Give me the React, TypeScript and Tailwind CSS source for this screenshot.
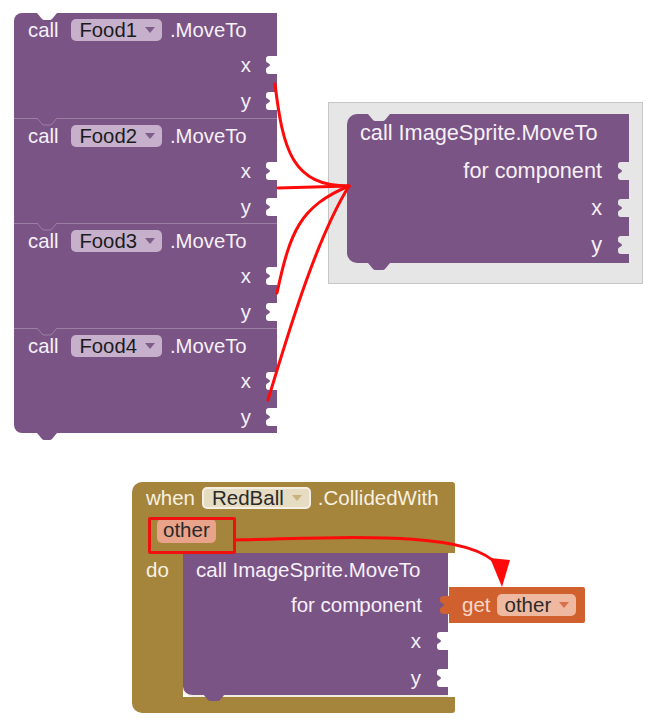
import React from "react";

const PURPLE = "bg-[#7b5486]";

// white cut-out where a value block would plug in
function Socket({ fill = "#ffffff" }: { fill?: string }) {
  return (
    <svg width="11" height="18" viewBox="0 0 11 18" className="block">
      <path d="M11,0 H3 Q0,0 0,3 V5 Q0,6 2,7 Q4,8 4,9 Q4,10 2,11 Q0,12 0,13 V15 Q0,18 3,18 H11 Z" fill={fill} />
    </svg>
  );
}

function Dropdown({ label, bg, arrow, text = "text-[#1c1c1c]", border = "" }: { label: string; bg: string; arrow: string; text?: string; border?: string }) {
  return (
    <span className={`inline-flex items-center h-[22px] rounded-[5px] pl-[8px] pr-[7px] gap-[8px] ${bg} ${text} ${border}`}>
      <span className="leading-none">{label}</span>
      <svg width="10" height="6" viewBox="0 0 10 6">
        <path d="M0,0 H10 L5,6 Z" fill={arrow} />
      </svg>
    </span>
  );
}

function Row({ label, h, fill, gap = "mr-[15px]" }: { label: string; h: string; fill?: string; gap?: string }) {
  return (
    <div className={`flex items-center justify-end ${h}`}>
      <span className={`leading-none ${gap}`}>{label}</span>
      <Socket fill={fill} />
    </div>
  );
}

function FoodBlock({ n, first, last }: { n: number; first?: boolean; last?: boolean }) {
  return (
    <div
      className={`relative ${PURPLE} h-[105px] text-[20.3px] text-[#f6f0f7] ${first ? "rounded-tl-[8px]" : "border-t border-[#9b80a3]"} ${last ? "rounded-bl-[8px]" : ""}`}
    >
      {first ? (
        <svg width="20" height="7" viewBox="0 0 20 7" className="absolute top-0 left-[23px]">
          <path d="M0,0 H20 L15,6 Q14,7 13,7 H7 Q6,7 5,6 Z" fill="#ffffff" />
        </svg>
      ) : (
        <svg width="22" height="8" viewBox="0 0 22 8" className="absolute -top-px left-[22px]">
          <path d="M1,0 L6,6 Q7,7 8,7 H14 Q15,7 16,6 L21,0" fill="#7b5486" stroke="#9b80a3" strokeWidth="1" />
        </svg>
      )}
      {last && (
        <svg width="20" height="7" viewBox="0 0 20 7" className="absolute top-full left-[23px]">
          <path d="M0,0 H20 L15,6 Q14,7 13,7 H7 Q6,7 5,6 Z" fill="#7b5486" />
        </svg>
      )}
      <div className="flex items-center h-[34px] pl-[14px] gap-[13px]">
        <span className="leading-none">call</span>
        <span className="flex items-center gap-[8px]">
          <Dropdown label={`Food${n}`} bg="bg-[#c6b0cc]" arrow="#7f5d89" />
          <span className="leading-none">.MoveTo</span>
        </span>
      </div>
      <Row label="x" h="h-[36px]" />
      <Row label="y" h="h-[36px]" />
    </div>
  );
}

export default function App() {
  return (
    <div className="relative w-[653px] h-[720px] bg-white overflow-hidden" style={{ fontFamily: '"Liberation Sans", Arial, sans-serif' }}>
      {/* stacked Food blocks */}
      <div className="absolute left-[14px] top-[13px] w-[263px] flex flex-col">
        <FoodBlock n={1} first />
        <FoodBlock n={2} />
        <FoodBlock n={3} />
        <FoodBlock n={4} last />
      </div>

      {/* generic MoveTo in grey panel */}
      <div className="absolute left-[328px] top-[102px] w-[315px] h-[182px] bg-[#e6e6e6] border border-[#c6c6c6] pt-[11px] pl-[18px]">
        <div className={`relative ${PURPLE} w-[282px] h-[149px] rounded-l-[10px] text-[21.7px] text-[#f6f0f7]`}>
          <svg width="22" height="7" viewBox="0 0 22 7" className="absolute top-0 left-[21px]">
            <path d="M0,0 H22 L17,6 Q16,7 15,7 H7 Q6,7 5,6 Z" fill="#e6e6e6" />
          </svg>
          <svg width="22" height="7" viewBox="0 0 22 7" className="absolute top-full left-[21px]">
            <path d="M0,0 H22 L17,6 Q16,7 15,7 H7 Q6,7 5,6 Z" fill="#7b5486" />
          </svg>
          <div className="flex items-center h-[38px] pl-[13px]">
            <span className="leading-none">call ImageSprite.MoveTo</span>
          </div>
          <Row label="for component" h="h-[37px]" fill="#e6e6e6" gap="mr-[16px]" />
          <Row label="x" h="h-[37px]" fill="#e6e6e6" gap="mr-[16px]" />
          <Row label="y" h="h-[37px]" fill="#e6e6e6" gap="mr-[16px]" />
        </div>
      </div>

      {/* event handler */}
      <div className="absolute left-[132px] top-[482px] w-[323px] flex flex-col text-[20.5px] text-[#f7f1e2]">
        <div className="bg-[#a5843b] rounded-tl-[10px] rounded-tr-[3px] h-[71px] pl-[14px] pt-[3px]">
          <div className="flex items-center h-[26px] gap-[7px]">
            <span className="leading-none">when</span>
            <Dropdown label="RedBall" bg="bg-[#e5dcc2]" arrow="#c9b27c" text="text-[#2a2a2a]" border="border-2 border-[#f3efe4]" />
            <span className="leading-none">.CollidedWith</span>
          </div>
          <div className="flex items-center h-[39px] pl-[11px]">
            <span className="inline-flex items-center h-[24px] rounded-[5px] px-[6px] bg-[#e8a38a] text-[#2a2a2a] leading-none">other</span>
          </div>
        </div>
        <div className="flex">
          <div className="bg-[#a5843b] w-[51px] h-[144px] pl-[14px] flex flex-col">
            <div className="flex items-center h-[34px]">
              <span className="leading-none">do</span>
            </div>
          </div>
          <div className={`relative ${PURPLE} w-[265px] h-[144px] rounded-bl-[10px] border-b-2 border-[#f1ece2] text-[#f6f0f7]`}>
            <svg width="22" height="7" viewBox="0 0 22 7" className="absolute top-full left-[20px] -mt-[1px]">
              <path d="M0,0 H22 L17,6 Q16,7 15,7 H7 Q6,7 5,6 Z" fill="#7b5486" />
            </svg>
            <div className="flex items-center h-[34px] pl-[13px]">
              <span className="leading-none">call ImageSprite.MoveTo</span>
            </div>
            <div className="flex items-center justify-end h-[36px]">
              <span className="leading-none mr-[26px]">for component</span>
            </div>
            <Row label="x" h="h-[36px]" gap="mr-[16px]" />
            <Row label="y" h="h-[38px]" gap="mr-[16px]" />
          </div>
        </div>
        <div className="bg-[#a5843b] h-[16px] rounded-bl-[10px] rounded-br-[3px]" />
      </div>

      {/* get other */}
      <div className="absolute left-[440px] top-[587px] flex items-center">
        <svg width="9" height="36" viewBox="0 0 9 36" className="block">
          <path d="M9,0 V9 H4 Q0,9 0,12 V14 Q0,15 2,16 Q4,17 4,18 Q4,19 2,20 Q0,21 0,22 V24 Q0,27 4,27 H9 V36 Z" fill="#d0612f" />
        </svg>
        <div className="bg-[#d0612f] h-[36px] w-[136px] rounded-r-[2px] flex items-center pl-[13px] gap-[6px] text-[20.5px]">
          <span className="leading-none text-[#f7d7c9]">get</span>
          <Dropdown label="other" bg="bg-[#efb9a1]" arrow="#d9704a" text="text-[#2a2a2a]" />
        </div>
      </div>

      {/* annotation box */}
      <div className="absolute left-[148px] top-[517px] w-[88px] h-[37px] border-[3px] border-[#f01010] rounded-[2px]" />

      {/* arrows */}
      <svg width="653" height="720" className="absolute inset-0 pointer-events-none">
        <g stroke="#ff0a0a" strokeWidth="3" fill="none" strokeLinecap="round">
          <path d="M275,84 C283,150 292,186 349,186" />
          <path d="M278,188 L349,186" />
          <path d="M277,293 C290,232 300,206 349,186" />
          <path d="M268,400 C292,320 318,236 349,186" />
          <path d="M236,540 C380,536 470,533 499,566" />
        </g>
        <path d="M490,558 L510,560 L502,587 Z" fill="#ff0a0a" />
      </svg>
    </div>
  );
}
